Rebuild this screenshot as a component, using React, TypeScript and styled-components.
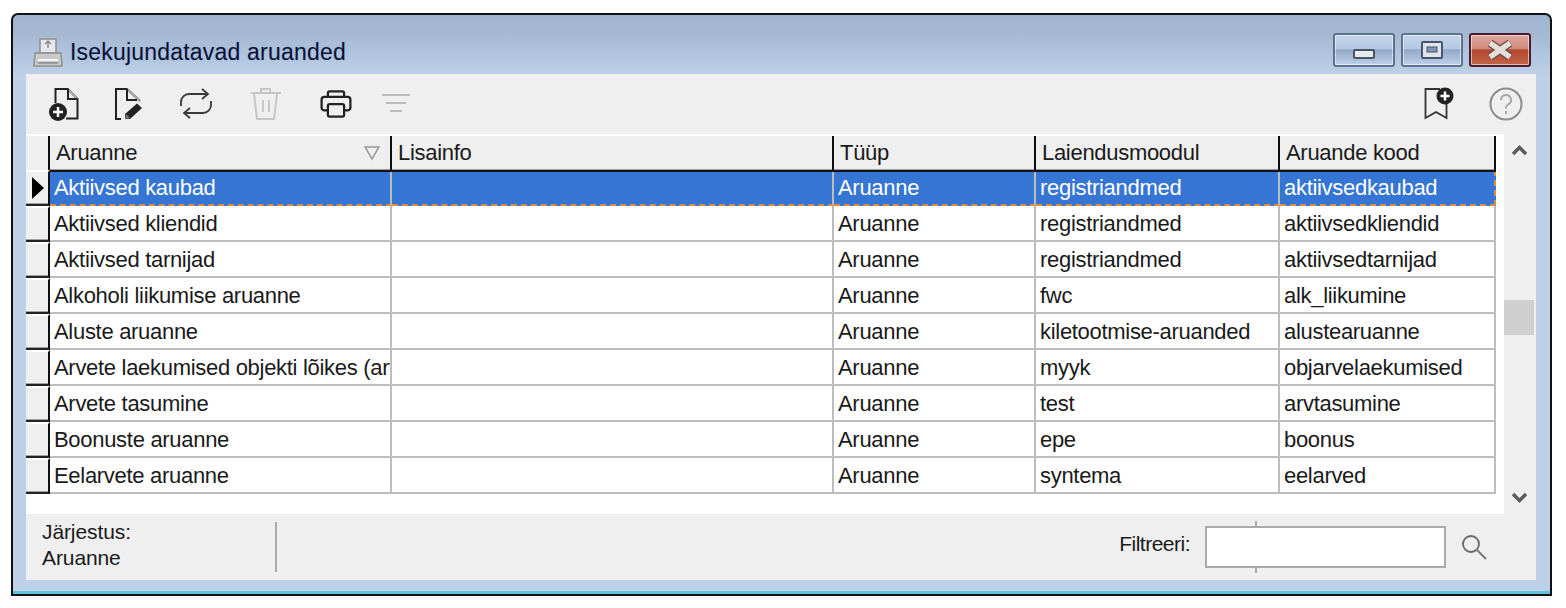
import React from 'react';
import styled, { createGlobalStyle } from 'styled-components';

const GlobalStyle = createGlobalStyle`
    html, body {
        margin: 0;
        padding: 0;
        background: #fff;
        font-family: "Liberation Sans", Arial, sans-serif;
    }
`;

const Page = styled.div`
    width: 1566px;
    height: 608px;
    padding: 13px 0 0 11px;
    box-sizing: border-box;
    overflow: hidden;
`;

const Win = styled.div`
    width: 1541px;
    height: 583px;
    box-sizing: border-box;
    border: 2px solid #111;
    border-radius: 7px 7px 0 0;
    background: linear-gradient(180deg, #9fb3cf 0, #a6b9d3 20px, #bdd0e8 60px, #bed0e8 100%);
    display: flex;
    flex-direction: column;
    box-shadow: inset 0 -3px 0 #5cc5dc;
    padding: 0 14px 14px 13px;
`;

const TitleBar = styled.div`
    height: 59px;
    flex: none;
    display: flex;
    align-items: center;
    padding: 16px 5px 0 6px;
    box-sizing: border-box;
`;

const TitleText = styled.div`
    margin-left: 6px;
    font-size: 23px;
    letter-spacing: 0.2px;
    color: #0f0f2c;
    text-shadow: 0 0 2px rgba(120, 170, 240, 0.7);
`;

const WinButtons = styled.div`
    margin-left: auto;
    align-self: flex-start;
    margin-top: 2px;
    display: flex;
    gap: 6px;
`;

const WinButton = styled.div<{ $close?: boolean }>`
    width: 62px;
    height: 34px;
    box-sizing: border-box;
    border: 2px solid ${p => (p.$close ? '#4d1c2c' : '#5f7290')};
    border-radius: 3px;
    display: flex;
    align-items: center;
    justify-content: center;
    background: ${p =>
        p.$close
            ? 'linear-gradient(180deg, #dfa79d 0, #cf8a7c 45%, #b2492f 50%, #c2654b 100%)'
            : 'linear-gradient(180deg, #c4d4e9 0, #b5c8e2 45%, #93a9c6 50%, #bcd0ea 100%)'};
    box-shadow: inset 0 0 0 1px rgba(255, 255, 255, 0.55);
`;

const MinGlyph = styled.svg`
    margin-top: 8px;
`;

const Panel = styled.div`
    flex: 1;
    display: flex;
    flex-direction: column;
    background: #efefef;
`;

const Toolbar = styled.div`
    height: 60px;
    flex: none;
    display: flex;
    align-items: center;
    padding-left: 2px;
`;

const ToolSlot = styled.div<{ $w: number }>`
    width: ${p => p.$w}px;
    display: flex;
    justify-content: center;
    flex: none;
`;

const ToolSpacer = styled.div`
    flex: 1;
`;

const GridArea = styled.div`
    height: 380px;
    flex: none;
    display: flex;
`;

const TableWrap = styled.div`
    width: 1478px;
    flex: none;
    background: #fff;
    padding-top: 2px;
    box-sizing: border-box;
`;

const Row = styled.div<{ $head?: boolean }>`
    display: grid;
    grid-template-columns: 24px 342px 442px 202px 244px 216px;
    height: ${p => (p.$head ? '34px' : '36px')};
`;

const Corner = styled.div`
    background: #efefef;
    border-right: 2px solid #111;
    border-bottom: 2px solid #777;
    box-sizing: border-box;
`;

const RowHead = styled.div`
    background: #efefef;
    border-top: 2px solid #fff;
    border-right: 2px solid #111;
    border-bottom: 2px solid #222;
    box-shadow: inset 0 -1px 0 #a0a0a0;
    box-sizing: border-box;
    display: flex;
    align-items: center;
    padding-left: 6px;
`;

const HeadCell = styled.div`
    position: relative;
    background: #efefef;
    border-right: 2px solid #111;
    border-bottom: 2px solid #111;
    box-shadow: inset 0 -1px 0 #a0a0a0;
    box-sizing: border-box;
    font-size: 22px;
    letter-spacing: -0.3px;
    line-height: 34px;
    padding-left: 6px;
    color: #1a1a1a;
    white-space: nowrap;
`;

const SortMark = styled.svg`
    position: absolute;
    right: 10px;
    top: 9px;
`;

const Cell = styled.div<{ $selected?: boolean; $last?: boolean }>`
    box-sizing: border-box;
    font-size: 22px;
    letter-spacing: -0.3px;
    padding-left: 4px;
    color: ${p => (p.$selected ? '#fff' : '#1a1a1a')};
    background: ${p => (p.$selected ? '#3575d3' : '#fff')};
    border-right: 2px ${p => (p.$selected && p.$last ? 'dashed #e08a3c' : 'solid #bdbdbd')};
    border-bottom: 2px ${p => (p.$selected ? 'dashed #e08a3c' : 'solid #bdbdbd')};
    border-top: ${p => (p.$selected ? '2px dashed #e08a3c' : 'none')};
    line-height: ${p => (p.$selected ? '31px' : '36px')};
    white-space: nowrap;
    overflow: hidden;
`;

const ScrollBar = styled.div`
    width: 30px;
    flex: none;
    display: flex;
    flex-direction: column;
    align-items: center;
    justify-content: space-between;
    padding: 11px 0 11px;
    box-sizing: border-box;
`;

const ScrollThumb = styled.div`
    width: 30px;
    height: 35px;
    background: #cfcfcf;
    margin-top: -14px;
`;

const Footer = styled.div`
    flex: 1;
    display: flex;
    align-items: center;
    position: relative;
`;

const SortInfo = styled.div`
    width: 235px;
    height: 50px;
    margin-left: 16px;
    flex: none;
    box-sizing: border-box;
    border-right: 2px solid #aaa;
    font-size: 21px;
    letter-spacing: -0.1px;
    line-height: 26px;
    color: #1a1a1a;
`;

const SortText = styled.div`
    margin-top: -3px;
`;

const FilterLabel = styled.div`
    margin-left: auto;
    padding-bottom: 6px;
    font-size: 21px;
    letter-spacing: -0.5px;
    color: #1a1a1a;
`;

const FilterBox = styled.div`
    position: relative;
    width: 241px;
    height: 42px;
    margin: 0 14px 0 15px;
    box-sizing: border-box;
    border: 2px solid #aaa;
    background: #fff;
    &::before,
    &::after {
        content: '';
        position: absolute;
        left: 48px;
        width: 2px;
        height: 5px;
        background: #aaa;
    }
    &::before {
        top: -7px;
    }
    &::after {
        bottom: -7px;
    }
`;

const FilterIcon = styled.svg`
    margin-right: 48px;
    flex: none;
`;

const ink = '#222';

const PrinterTitleIcon = () => (
    <svg width="32" height="32" viewBox="0 0 32 32" fill="none">
        <path d="M8 2h16v14H8z" fill="#e4e8ee" stroke="#8d8d8d" strokeWidth="1.5" />
        <path d="M16 4v7M13 7l3-3 3 3" stroke="#8a8a8a" strokeWidth="1.5" />
        <path d="M3 16h26l1 13H2z" fill="#c9c9c9" stroke="#8e8e8e" strokeWidth="1.5" />
        <path d="M6 23h20" stroke="#f4f4f4" strokeWidth="2" />
        <path d="M6 26h20" stroke="#888" strokeWidth="1.5" />
    </svg>
);

const NewIcon = () => (
    <svg width="40" height="40" viewBox="0 0 40 40" fill="none">
        <path d="M12.500 19V5H25L34.500 15V34.500H23" stroke={ink} strokeWidth="2" />
        <path d="M25 5L34.500 15" stroke="#aaa" strokeWidth="2" />
        <path d="M25 5V15H34.500" stroke={ink} strokeWidth="2" />
        <circle cx="15" cy="28" r="9" fill={ink} />
        <path d="M10 28h10M15 23v10" stroke="#fff" strokeWidth="2.500" />
    </svg>
);

const EditIcon = () => (
    <svg width="40" height="40" viewBox="0 0 40 40" fill="none">
        <path d="M14 35H9V5H20L33 17" stroke={ink} strokeWidth="2" />
        <path d="M20 5L33 17" stroke="#aaa" strokeWidth="2" />
        <path d="M20 5V16H30" stroke={ink} strokeWidth="2" />
        <path d="M18 30L30 19.500 35 24 23 35H18z" fill={ink} />
        <path d="M18 35l1-5 4 4z" fill="#777" />
    </svg>
);

const RefreshIcon = () => (
    <svg width="40" height="40" viewBox="0 0 40 40" fill="none" stroke="#3a3a3a" strokeWidth="1.800">
        <path d="M5 22v-4a8 8 0 0 1 8-8h19M26 5l6 5-6 5" />
        <path d="M35 17v4a8 8 0 0 1-8 8H8M14 24l-6 5 6 5" />
    </svg>
);

const TrashIcon = () => (
    <svg width="40" height="40" viewBox="0 0 40 40" fill="none" stroke="#c6c6c6" strokeWidth="2">
        <path d="M5 9h30M15 9V5h9v4M8 10l3 25h17l3-25" />
        <path d="M17 16v12M23 16v12" />
    </svg>
);

const PrintIcon = () => (
    <svg width="36" height="36" viewBox="0 0 40 40" fill="none" stroke={ink} strokeWidth="2.500">
        <path d="M11 12V8a2 2 0 0 1 2-2h14a2 2 0 0 1 2 2v4" />
        <path d="M11 27H7a3 3 0 0 1-3-3V15a3 3 0 0 1 3-3h26a3 3 0 0 1 3 3v9a3 3 0 0 1-3 3h-4" />
        <rect x="11" y="20" width="18" height="14" rx="2" />
    </svg>
);

const SortIcon = () => (
    <svg width="40" height="40" viewBox="0 0 40 40" fill="none" stroke="#bdbdbd" strokeWidth="2">
        <path d="M5 11h28M9 19h20M13 27h12" />
    </svg>
);

const BookmarkIcon = () => (
    <svg width="40" height="40" viewBox="0 0 40 40" fill="none">
        <path d="M22 5H7.500V34L18 28L28.500 34V18" stroke="#333" strokeWidth="1.800" />
        <circle cx="27" cy="12" r="8.500" fill={ink} />
        <path d="M22.500 12h9M27 7.500v9" stroke="#fff" strokeWidth="2.500" />
    </svg>
);

const HelpIcon = () => (
    <svg width="34" height="34" viewBox="0 0 34 34" fill="none" stroke="#8c8c8c" strokeWidth="2">
        <circle cx="17" cy="17" r="15.500" />
        <path d="M12 13a5 5 0 1 1 7 4.500c-1.500 1-2 2-2 4" stroke="#a8a8a8" />
        <path d="M17 24v3" stroke="#a8a8a8" />
    </svg>
);

const rows = [
    ['Aktiivsed kaubad', '', 'Aruanne', 'registriandmed', 'aktiivsedkaubad'],
    ['Aktiivsed kliendid', '', 'Aruanne', 'registriandmed', 'aktiivsedkliendid'],
    ['Aktiivsed tarnijad', '', 'Aruanne', 'registriandmed', 'aktiivsedtarnijad'],
    ['Alkoholi liikumise aruanne', '', 'Aruanne', 'fwc', 'alk_liikumine'],
    ['Aluste aruanne', '', 'Aruanne', 'kiletootmise-aruanded', 'alustearuanne'],
    ['Arvete laekumised objekti lõikes (arve', '', 'Aruanne', 'myyk', 'objarvelaekumised'],
    ['Arvete tasumine', '', 'Aruanne', 'test', 'arvtasumine'],
    ['Boonuste aruanne', '', 'Aruanne', 'epe', 'boonus'],
    ['Eelarvete aruanne', '', 'Aruanne', 'syntema', 'eelarved'],
];

const columns = ['Aruanne', 'Lisainfo', 'Tüüp', 'Laiendusmoodul', 'Aruande kood'];

const App = () => {
    return (
        <Page>
            <GlobalStyle />
            <Win>
                <TitleBar>
                    <PrinterTitleIcon />
                    <TitleText>Isekujundatavad aruanded</TitleText>
                    <WinButtons>
                        <WinButton>
                            <MinGlyph width="22" height="10" viewBox="0 0 22 10">
                                <rect x="1" y="1" width="20" height="8" rx="1" fill="#e6e9ee" stroke="#4a5566" strokeWidth="2" />
                            </MinGlyph>
                        </WinButton>
                        <WinButton>
                            <svg width="22" height="18" viewBox="0 0 22 18" fill="none">
                                <rect x="1" y="1" width="20" height="16" rx="1" fill="#dfe4ec" stroke="#4a5566" strokeWidth="2" />
                                <rect x="6" y="6" width="10" height="5" fill="#8195b3" stroke="#4a5566" />
                            </svg>
                        </WinButton>
                        <WinButton $close>
                            <svg width="30" height="20" viewBox="0 0 30 20" fill="none">
                                <path d="M5 3l20 14M25 3L5 17" stroke="#6b4a44" strokeWidth="8" />
                                <path d="M5 3l20 14M25 3L5 17" stroke="#e4dedb" strokeWidth="5.500" />
                            </svg>
                        </WinButton>
                    </WinButtons>
                </TitleBar>
                <Panel>
                    <Toolbar>
                        <ToolSlot $w={70}><NewIcon /></ToolSlot>
                        <ToolSlot $w={58}><EditIcon /></ToolSlot>
                        <ToolSlot $w={80}><RefreshIcon /></ToolSlot>
                        <ToolSlot $w={60}><TrashIcon /></ToolSlot>
                        <ToolSlot $w={80}><PrintIcon /></ToolSlot>
                        <ToolSlot $w={42}><SortIcon /></ToolSlot>
                        <ToolSpacer />
                        <ToolSlot $w={76}><BookmarkIcon /></ToolSlot>
                        <ToolSlot $w={60}><HelpIcon /></ToolSlot>
                    </Toolbar>
                    <GridArea>
                        <TableWrap>
                            <Row $head>
                                <Corner />
                                {columns.map((c, i) => (
                                    <HeadCell key={c}>
                                        {c}
                                        {i === 0 && (
                                            <SortMark width="16" height="16" viewBox="0 0 16 16" fill="none">
                                                <path d="M1 2h14L8 14z" stroke="#999" strokeWidth="1.500" />
                                            </SortMark>
                                        )}
                                    </HeadCell>
                                ))}
                            </Row>
                            {rows.map((r, ri) => (
                                <Row key={r[4]}>
                                    <RowHead>
                                        {ri === 0 && (
                                            <svg width="12" height="22" viewBox="0 0 12 22">
                                                <path d="M0 0l12 11L0 22z" fill="#000" />
                                            </svg>
                                        )}
                                    </RowHead>
                                    {r.map((v, ci) => (
                                        <Cell key={ci} $selected={ri === 0} $last={ci === 4}>{v}</Cell>
                                    ))}
                                </Row>
                            ))}
                        </TableWrap>
                        <ScrollBar>
                            <svg width="15" height="11" viewBox="0 0 15 11">
                                <path d="M1 9l6.500-6.500L14 9" fill="none" stroke="#5c5c5c" strokeWidth="3.500" />
                            </svg>
                            <ScrollThumb />
                            <svg width="15" height="11" viewBox="0 0 15 11">
                                <path d="M1 2l6.500 6.500L14 2" fill="none" stroke="#5c5c5c" strokeWidth="3.500" />
                            </svg>
                        </ScrollBar>
                    </GridArea>
                    <Footer>
                        <SortInfo>
                            <SortText>
                                Järjestus:
                                <br />
                                Aruanne
                            </SortText>
                        </SortInfo>
                        <FilterLabel>Filtreeri:</FilterLabel>
                        <FilterBox />
                        <FilterIcon width="28" height="28" viewBox="0 0 28 28" fill="none">
                            <circle cx="11" cy="11" r="8" stroke="#666" strokeWidth="1.800" />
                            <path d="M17 17l9 9" stroke="#777" strokeWidth="2" />
                        </FilterIcon>
                    </Footer>
                </Panel>
            </Win>
        </Page>
    );
};

export default App;
